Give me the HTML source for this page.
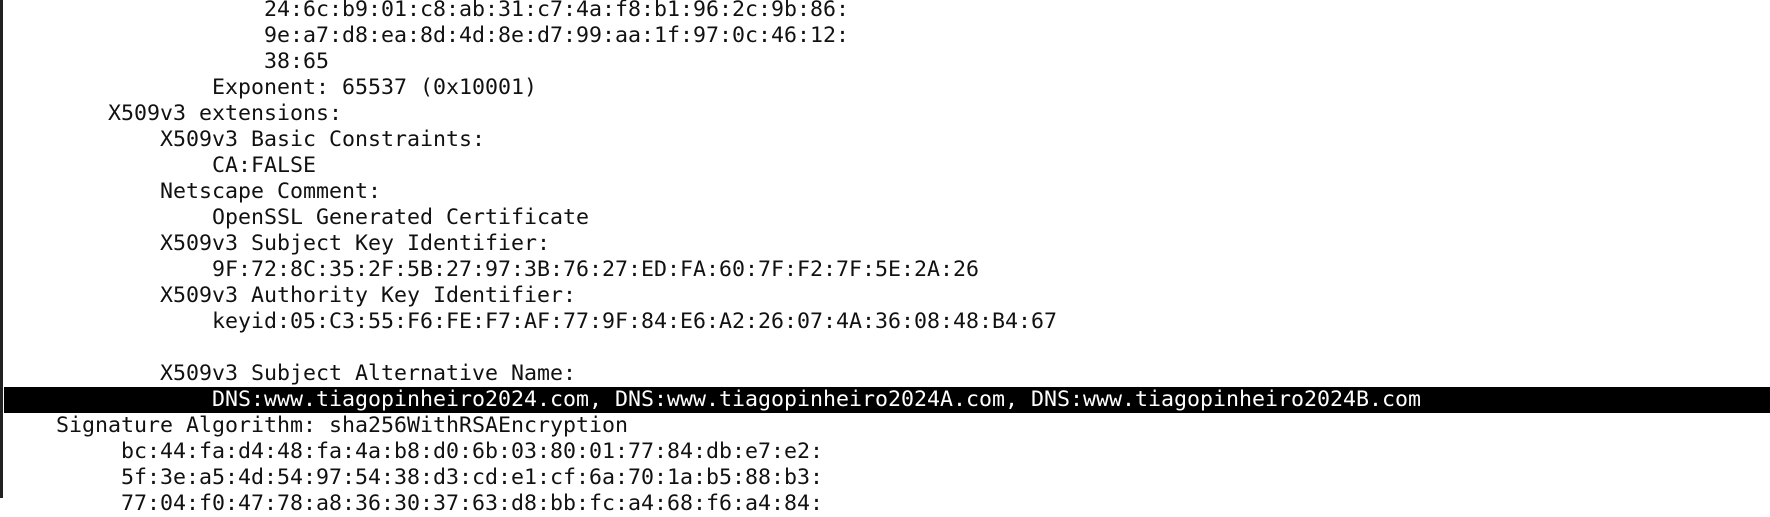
<!DOCTYPE html>
<html><head><meta charset="utf-8"><style>
html,body{margin:0;padding:0;background:#fff;width:1770px;height:498px;overflow:hidden;}
.border{position:absolute;left:0;top:0;width:3px;height:498px;background:#222;}
.t{position:absolute;left:4px;top:-3px;right:0;font-family:"DejaVu Sans Mono","Liberation Mono",monospace;font-size:21.6px;line-height:26px;color:#111;}
.t div{height:26px;white-space:pre;}
.hl{background:#000;color:#fff;}
</style></head><body>
<div class="border"></div>
<div class="t"><div>                    24:6c:b9:01:c8:ab:31:c7:4a:f8:b1:96:2c:9b:86:</div><div>                    9e:a7:d8:ea:8d:4d:8e:d7:99:aa:1f:97:0c:46:12:</div><div>                    38:65</div><div>                Exponent: 65537 (0x10001)</div><div>        X509v3 extensions:</div><div>            X509v3 Basic Constraints: </div><div>                CA:FALSE</div><div>            Netscape Comment: </div><div>                OpenSSL Generated Certificate</div><div>            X509v3 Subject Key Identifier: </div><div>                9F:72:8C:35:2F:5B:27:97:3B:76:27:ED:FA:60:7F:F2:7F:5E:2A:26</div><div>            X509v3 Authority Key Identifier: </div><div>                keyid:05:C3:55:F6:FE:F7:AF:77:9F:84:E6:A2:26:07:4A:36:08:48:B4:67</div><div> </div><div>            X509v3 Subject Alternative Name: </div><div class="hl">                DNS:www.tiagopinheiro2024.com, DNS:www.tiagopinheiro2024A.com, DNS:www.tiagopinheiro2024B.com</div><div>    Signature Algorithm: sha256WithRSAEncryption</div><div>         bc:44:fa:d4:48:fa:4a:b8:d0:6b:03:80:01:77:84:db:e7:e2:</div><div>         5f:3e:a5:4d:54:97:54:38:d3:cd:e1:cf:6a:70:1a:b5:88:b3:</div><div>         77:04:f0:47:78:a8:36:30:37:63:d8:bb:fc:a4:68:f6:a4:84:</div></div>
</body></html>
